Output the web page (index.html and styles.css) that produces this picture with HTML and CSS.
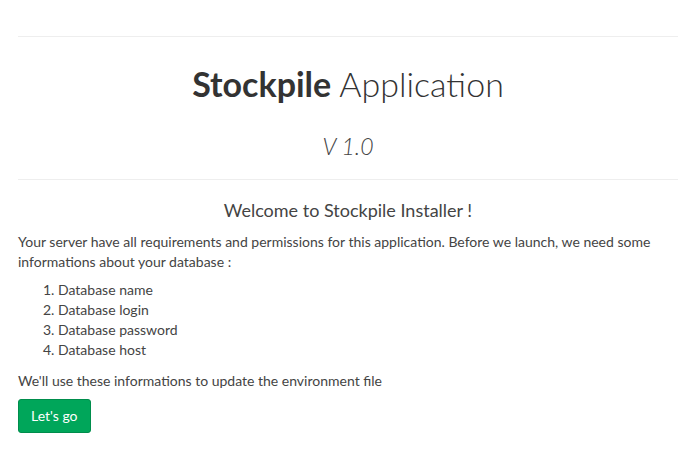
FILE: index.html
```html
<!DOCTYPE html>
<html>
<head>
<meta charset="utf-8">
<link rel="stylesheet" href="styles.css">
</head>
<body>
<div class="container">
  <hr class="rule">
  <h1 class="title"><b>Stockpile</b> Application</h1>
  <h2 class="version">V 1.0</h2>
  <hr class="rule">
  <h3 class="welcome">Welcome to Stockpile Installer !</h3>
  <p class="text">Your server have all requirements and permissions for this application. Before we launch, we need some informations about your database :</p>
  <ol class="list">
    <li>Database name</li>
    <li>Database login</li>
    <li>Database password</li>
    <li>Database host</li>
  </ol>
  <p class="text last">We'll use these informations to update the environment file</p>
  <button class="btn">Let's go</button>
</div>
</body>
</html>
```
FILE: styles.css
```css
html, body {
  margin: 0;
  padding: 0;
  background: #fff;
}
body {
  font-family: "Lato", "Open Sans", sans-serif;
  font-size: 14px;
  line-height: 20px;
  color: #333;
}
.container {
  padding: 0 18px;
}
.rule {
  border: 0;
  border-top: 1px solid #eee;
  margin: 0;
}
.container > .rule:first-child {
  margin-top: 36px;
}
.title {
  margin: 22px 0 0;
  text-align: center;
  font-size: 34px;
  line-height: 50px;
  font-weight: 300;
  color: #333;
}
.title b {
  font-weight: 700;
}
.version {
  margin: 21px 0 17px;
  text-align: center;
  font-size: 23px;
  line-height: 32px;
  font-weight: 300;
  font-style: italic;
  color: #444;
}
.welcome {
  margin: 18px 0 10px;
  text-align: center;
  font-size: 18px;
  line-height: 24px;
  font-weight: 400;
  color: #444;
}
.text {
  margin: 0 0 8px;
  color: #444;
}
.text.last {
  margin-bottom: 8px;
}
.list {
  margin: 0 0 11px;
  padding-left: 40px;
  color: #444;
}
.btn {
  display: block;
  font-family: inherit;
  font-size: 14px;
  line-height: 20px;
  padding: 6px 12px;
  color: #fff;
  background: #00a65a;
  border: 1px solid #008d4c;
  border-radius: 3px;
  cursor: pointer;
}
```
